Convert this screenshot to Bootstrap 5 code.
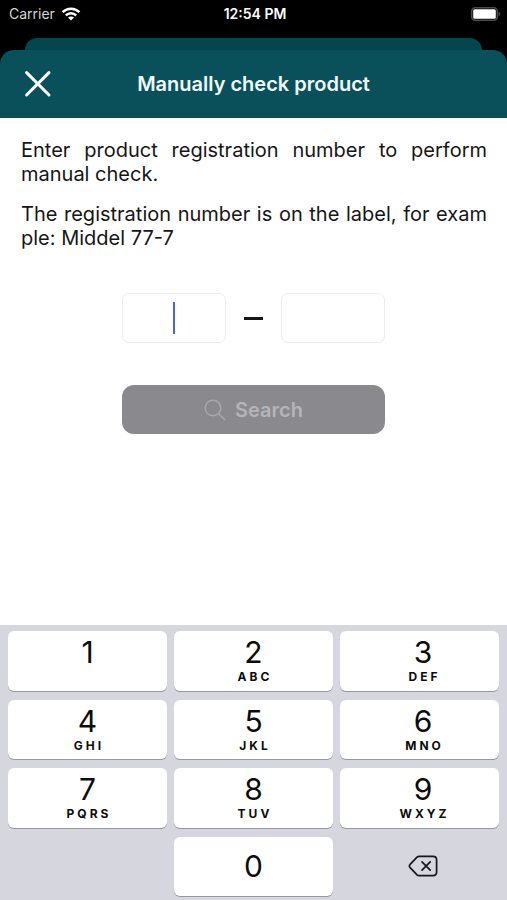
<!DOCTYPE html>
<html lang="en">
<head>
<meta charset="utf-8">
<meta name="viewport" content="width=device-width, initial-scale=1">
<title>Manually check product</title>
<link href="https://cdn.jsdelivr.net/npm/bootstrap@5.3.0/dist/css/bootstrap.min.css" rel="stylesheet">
<style>
  body { font-family: Inter, "Liberation Sans", sans-serif; color: #161616; background: #fff; }
  .status-bar { height: 38px; padding: 0 6px 10px 9px; color: #fff; display: grid; grid-template-columns: 1fr auto 1fr; align-items: center; font-size: 14px; line-height: 20px; }
  .carrier { color: #d4d4d4; gap: 6px; }
  .sheet-back { height: 12px; margin: 0 25px; background: #04454e; border-radius: 12px 12px 0 0; }
  .sheet-header { height: 68px; background: #09505b; border-radius: 14px 14px 0 0; color: #f2fafb; display: grid; grid-template-columns: 76px 1fr 76px; align-items: center; }
  .sheet-title { font-size: 20px; line-height: 24px; font-weight: 600; }
  .intro { padding: 20px 20px 0 21px; font-size: 20px; line-height: 24px; text-align: justify; }
  .check-form { width: 52%; margin-top: 43px; }
  .num-field { height: 50px; border: 1px solid #ececee; border-radius: 7px; text-align: center; font-size: 20px; }
  .num-field:focus { box-shadow: none; border-color: #ececee; }
  .field-active { caret-color: transparent; background: linear-gradient(#4468dc, #4468dc) center / 2px 32px no-repeat #fff; }
  .dash { width: 19px; height: 3px; background: #161616; margin: 0 18px; }
  .search-btn, .search-btn:disabled { margin-top: 42px; height: 49px; border: 0; border-radius: 12px; background: #8a898e; color: #b5b5b8; opacity: 1; font-size: 20px; font-weight: 600; line-height: 24px; gap: 9px; }
  .keypad { height: 275px; padding: 6px 8px 4px; background: #d5d6de; display: grid; grid-template-columns: repeat(3, 1fr); grid-template-rows: repeat(4, 1fr); gap: 9px 7px; }
  .key { border: 0; padding: 5px 0 0; border-radius: 6px; background: #fff; color: #0c0c0c; box-shadow: 0 1px 0 #97989d; display: flex; flex-direction: column; align-items: center; }
  .key-digit { font-size: 30px; line-height: 33px; font-weight: 400; }
  .key-letters { font-size: 12px; line-height: 16px; font-weight: 700; letter-spacing: 3px; padding-left: 3px; }
  .key-end { padding-left: 7px; }
  .key-zero { grid-column: 2; justify-content: center; padding: 0; }
  .key-delete { background: transparent; box-shadow: none; justify-content: center; padding: 0 0 0 7px; }
</style>
</head>
<body>
<div class="d-flex flex-column min-vh-100">
  <div class="bg-black">
    <div class="status-bar">
      <div class="d-flex align-items-center carrier">
        <span>Carrier</span>
        <svg width="20" height="14" viewBox="0 0 20 14" fill="none" stroke="#fff" stroke-width="2.5" aria-hidden="true">
          <path d="M1.6 5.2C6.4.5 13.6.5 18.4 5.2M4.8 8.4C7.8 5.5 12.2 5.5 15.2 8.4"/>
          <path d="M7 10.6C8.8 9 11.2 9 13 10.6L10 13.6Z" fill="#fff" stroke="none"/>
        </svg>
      </div>
      <span class="fw-semibold">12:54 PM</span>
      <svg class="ms-auto" width="31" height="16" viewBox="0 0 31 16" aria-hidden="true">
        <rect x="1.7" y="1.7" width="25.6" height="12.6" rx="3.5" fill="none" stroke="#4b4b4d" stroke-width="1.6"/>
        <rect x="3.2" y="3.2" width="22.6" height="9.6" rx="1.5" fill="#fff"/>
        <path d="M28.6 5.4Q32 8 28.6 10.6Z" fill="#4b4b4d"/>
      </svg>
    </div>
    <div class="sheet-back"></div>
    <header class="sheet-header">
      <button type="button" class="btn p-0 border-0 d-flex justify-content-center" aria-label="Close">
        <svg width="28" height="28" viewBox="0 0 28 28" fill="none" stroke="#fff" stroke-width="3" stroke-linecap="round" aria-hidden="true"><path d="M2.6 2.6 25 25M25 2.6 2.6 25"/></svg>
      </button>
      <h1 class="sheet-title text-center m-0">Manually check product</h1>
    </header>
  </div>

  <main class="flex-grow-1">
    <div class="intro">
      <p class="mb-3">Enter product registration number to perform manual check.</p>
      <p class="m-0">The registration number is on the label, for exam<wbr>ple: Middel 77-7</p>
    </div>
    <form class="check-form mx-auto">
      <div class="d-flex align-items-center">
        <input class="form-control num-field field-active" type="text" inputmode="numeric" aria-label="Registration number, first part">
        <span class="dash flex-shrink-0"></span>
        <input class="form-control num-field" type="text" inputmode="numeric" aria-label="Registration number, second part">
      </div>
      <button type="submit" class="btn search-btn w-100 d-flex align-items-center justify-content-center" disabled>
        <svg width="22" height="22" viewBox="0 0 22 22" fill="none" stroke="#a9a9ac" stroke-width="1.4" stroke-linecap="round" aria-hidden="true"><circle cx="9" cy="9" r="7.8"/><path d="M14.7 14.7 20.8 20.8"/></svg>
        <span>Search</span>
      </button>
    </form>
  </main>

  <div class="keypad">
    <button type="button" class="key"><span class="key-digit">1</span></button>
    <button type="button" class="key"><span class="key-digit">2</span><span class="key-letters">ABC</span></button>
    <button type="button" class="key key-end"><span class="key-digit">3</span><span class="key-letters">DEF</span></button>
    <button type="button" class="key"><span class="key-digit">4</span><span class="key-letters">GHI</span></button>
    <button type="button" class="key"><span class="key-digit">5</span><span class="key-letters">JKL</span></button>
    <button type="button" class="key key-end"><span class="key-digit">6</span><span class="key-letters">MNO</span></button>
    <button type="button" class="key"><span class="key-digit">7</span><span class="key-letters">PQRS</span></button>
    <button type="button" class="key"><span class="key-digit">8</span><span class="key-letters">TUV</span></button>
    <button type="button" class="key key-end"><span class="key-digit">9</span><span class="key-letters">WXYZ</span></button>
    <button type="button" class="key key-zero"><span class="key-digit">0</span></button>
    <button type="button" class="key key-delete" aria-label="Delete">
      <svg width="30" height="22" viewBox="0 0 30 22" fill="none" stroke="#17171a" stroke-width="1.7" stroke-linecap="round" stroke-linejoin="round" aria-hidden="true">
        <path d="M11.2 1.3H25Q28.6 1.3 28.6 4.9V17.1Q28.6 20.7 25 20.7H11.2Q9.9 20.7 9 19.8L1.9 12.3Q.8 11 1.9 9.7L9 2.2Q9.9 1.3 11.2 1.3Z"/>
        <path d="M14 6.8 22.2 15.2M22.2 6.8 14 15.2"/>
      </svg>
    </button>
  </div>
</div>
<script src="https://cdn.jsdelivr.net/npm/bootstrap@5.3.0/dist/js/bootstrap.bundle.min.js"></script>
</body>
</html>
